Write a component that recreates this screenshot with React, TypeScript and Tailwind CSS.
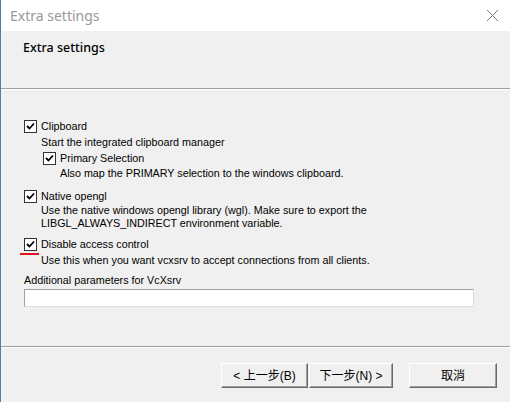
import React from "react";

const ui = "font-['Liberation_Sans','Noto_Sans_CJK_TC',sans-serif]";

function Check({ className = "" }: { className?: string }) {
  return (
    <span
      className={`flex h-[13px] w-[13px] shrink-0 items-center justify-center border border-[#333] bg-white ${className}`}
    >
      <svg width="9" height="9" viewBox="0 0 9 9">
        <path d="M1 4 L3.5 6.5 L8 1.5" fill="none" stroke="#000" strokeWidth="1.8" />
      </svg>
    </span>
  );
}

function Option({
  label,
  indent = false,
  children,
}: {
  label: string;
  indent?: boolean;
  children?: React.ReactNode;
}) {
  return (
    <div className={indent ? "pl-[19px]" : ""}>
      <div className="flex h-[16px] items-center gap-[4px]">
        <Check />
        <span>{label}</span>
      </div>
      {children}
    </div>
  );
}

function WizButton({ children, className = "" }: { children: React.ReactNode; className?: string }) {
  return (
    <button
      className={`flex h-[25px] items-center justify-center border border-t-white border-l-white border-r-[#696969] border-b-[#696969] bg-[#f0f0f0] text-[12px] text-black shadow-[inset_-1px_-1px_0_#a0a0a0] ${className}`}
    >
      {children}
    </button>
  );
}

export default function App() {
  return (
    <div className={`h-[402px] w-[510px] overflow-hidden border-l border-[#4a7fae] bg-[#f0f0f0] ${ui} text-[10.75px] text-black`}>
      {/* title bar */}
      <div className="flex h-[31px] items-center justify-between bg-white pl-[9px] pr-[9px]">
        <span className="font-['Noto_Sans',sans-serif] text-[14px] text-[#999]">Extra settings</span>
        <svg width="13" height="13" viewBox="0 0 13 13" className="mr-[2px]">
          <path d="M1 1 L12 12 M12 1 L1 12" stroke="#777" strokeWidth="1" />
        </svg>
      </div>

      {/* page header */}
      <div className="h-[58px] border-b border-[#a0a0a0] pl-[22px] pt-[8px]">
        <span className="font-['Noto_Sans',sans-serif] text-[12.5px] font-medium">Extra settings</span>
      </div>
      <div className="h-px bg-white" />

      {/* options */}
      <div className="h-[256px] pl-[23px] pr-[36px] pt-[28px]">
        <Option label="Clipboard">
          <div className="h-[16px] pl-[17px] leading-[16px]">Start the integrated clipboard manager</div>
          <Option label="Primary Selection" indent>
            <div className="h-[15px] pl-[17px] leading-[15px]">
              Also map the PRIMARY selection to the windows clipboard.
            </div>
          </Option>
        </Option>

        <div className="mt-[7px]">
          <Option label="Native opengl">
            <div className="pl-[17px] leading-[13px]">
              Use the native windows opengl library (wgl). Make sure to export the
              <br />
              LIBGL_ALWAYS_INDIRECT environment variable.
            </div>
          </Option>
        </div>

        <div className="relative mt-[6px]">
          <Option label="Disable access control">
            <div className="h-[16px] pl-[17px] leading-[16px]">
              Use this when you want vcxsrv to accept connections from all clients.
            </div>
          </Option>
          <span className="absolute left-[-4px] top-[17px] h-[2px] w-[19px] bg-[#e0141e]" />
        </div>

        <div className="mt-[4px] h-[16px] leading-[16px]">Additional parameters for VcXsrv</div>
        <div className="mt-[1px] h-[18px] w-[450px] border border-t-[#a0a0a0] border-l-[#a0a0a0] border-r-[#dcdcdc] border-b-[#dcdcdc] bg-white" />
      </div>

      {/* footer */}
      <div className="h-px bg-[#a0a0a0]" />
      <div className="h-px bg-white" />
      <div className="flex pl-[220px] pt-[15px]">
        <WizButton className="w-[87px]">&lt; 上一步(B)</WizButton>
        <WizButton className="ml-[1px] w-[84px]">下一步(N) &gt;</WizButton>
        <WizButton className="ml-[16px] w-[88px]">取消</WizButton>
      </div>
    </div>
  );
}
